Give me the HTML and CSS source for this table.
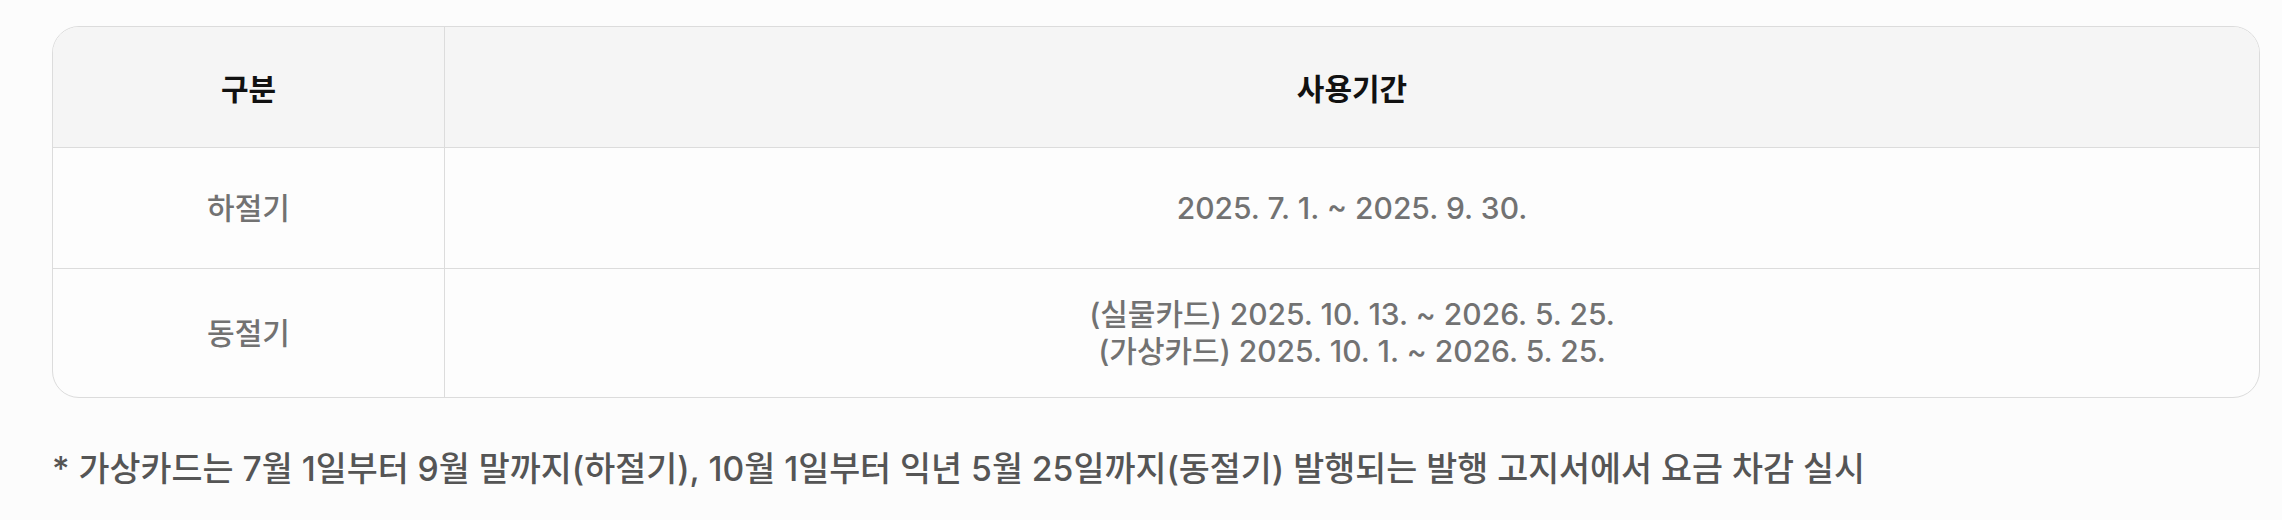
FILE: index.html
```html
<!DOCTYPE html>
<html lang="ko">
<head>
<meta charset="utf-8">
<link rel="stylesheet" href="styles.css">
</head>
<body>
<div class="page">
  <div class="table">
    <div class="cell head first">구분</div>
    <div class="cell head">사용기간</div>
    <div class="cell body first row1">하절기</div>
    <div class="cell body row1">2025. 7. 1. ~ 2025. 9. 30.</div>
    <div class="cell body first last">동절기</div>
    <div class="cell body last">
      <div>(실물카드) 2025. 10. 13. ~ 2026. 5. 25.</div>
      <div>(가상카드) 2025. 10. 1. ~ 2026. 5. 25.</div>
    </div>
  </div>
  <p class="note">* 가상카드는 7월 1일부터 9월 말까지(하절기), 10월 1일부터 익년 5월 25일까지(동절기) 발행되는 발행 고지서에서 요금 차감 실시</p>
</div>
</body>
</html>
```
FILE: styles.css
```css
html, body {
  margin: 0;
  padding: 0;
  background: #fcfcfc;
}
body {
  font-family: "Inter", "Noto Sans CJK KR", sans-serif;
}
.page {
  padding: 26px 22px 0 52px;
}
.table {
  display: grid;
  grid-template-columns: 392px 1fr;
  grid-template-rows: 121px 121px auto;
  border: 1px solid #dcdcdc;
  border-radius: 27px;
  overflow: hidden;
  background: #fdfdfd;
}
.cell {
  display: flex;
  flex-direction: column;
  align-items: center;
  justify-content: center;
  text-align: center;
  border-bottom: 1px solid #dcdcdc;
}
.cell.first {
  border-right: 1px solid #dcdcdc;
}
.cell.last {
  border-bottom: none;
  padding: 27px 0;
}
.head {
  background: #f5f5f5;
  color: #111;
  font-weight: 700;
  font-size: 30px;
}
.body {
  color: #727272;
  font-size: 30px;
  font-weight: 500;
  line-height: 37px;
}
.note {
  margin: 44px 0 0 0;
  font-size: 33.7px;
  font-weight: 500;
  color: #555;
}
```
